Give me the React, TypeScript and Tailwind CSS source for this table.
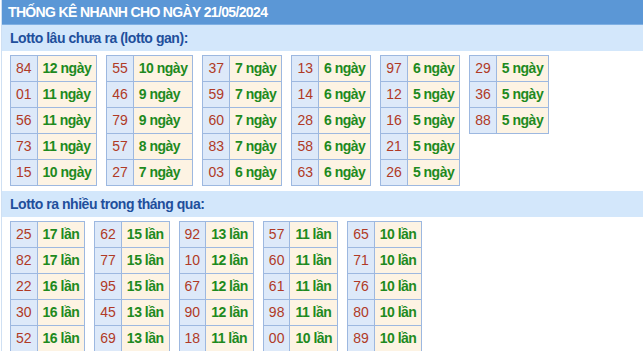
const ganData: [string, string][][] = [
  [["84", "12 ngày"], ["01", "11 ngày"], ["56", "11 ngày"], ["73", "11 ngày"], ["15", "10 ngày"]],
  [["55", "10 ngày"], ["46", "9 ngày"], ["79", "9 ngày"], ["57", "8 ngày"], ["27", "7 ngày"]],
  [["37", "7 ngày"], ["59", "7 ngày"], ["60", "7 ngày"], ["83", "7 ngày"], ["03", "6 ngày"]],
  [["13", "6 ngày"], ["14", "6 ngày"], ["28", "6 ngày"], ["58", "6 ngày"], ["63", "6 ngày"]],
  [["97", "6 ngày"], ["12", "5 ngày"], ["16", "5 ngày"], ["21", "5 ngày"], ["26", "5 ngày"]],
  [["29", "5 ngày"], ["36", "5 ngày"], ["88", "5 ngày"]],
];

const nhieuData: [string, string][][] = [
  [["25", "17 lần"], ["82", "17 lần"], ["22", "16 lần"], ["30", "16 lần"], ["52", "16 lần"]],
  [["62", "15 lần"], ["77", "15 lần"], ["95", "15 lần"], ["45", "13 lần"], ["69", "13 lần"]],
  [["92", "13 lần"], ["10", "12 lần"], ["67", "12 lần"], ["90", "12 lần"], ["18", "11 lần"]],
  [["57", "11 lần"], ["60", "11 lần"], ["61", "11 lần"], ["98", "11 lần"], ["00", "10 lần"]],
  [["65", "10 lần"], ["71", "10 lần"], ["76", "10 lần"], ["80", "10 lần"], ["89", "10 lần"]],
];

function LottoTable({ rows }: { rows: [string, string][] }) {
  return (
    <table className="border-collapse self-start">
      <tbody>
        {rows.map(([num, val]) => (
          <tr key={num} className="h-[26px]">
            <td className="border border-[#9db8e0] bg-[#dde9f9] px-[5px] text-[14px] text-[#b03a26]">{num}</td>
            <td className="border border-[#9db8e0] bg-[#fdf3e3] px-[5px] text-[14px] font-bold tracking-[-0.5px] text-[#1e8a1e]">{val}</td>
          </tr>
        ))}
      </tbody>
    </table>
  );
}

function SectionBar({ title }: { title: string }) {
  return (
    <div className="h-[26px] bg-[#d3e7fb] pl-[8px] flex items-center text-[14px] font-bold tracking-[-0.45px] text-[#1f4f9c]">
      {title}
    </div>
  );
}

export default function App() {
  return (
    <div className="w-[643px] h-[351px] overflow-hidden bg-white" style={{ fontFamily: '"Liberation Sans", Arial, sans-serif' }}>
      <div className="ml-[1px] border-l border-[#cfe0f3] min-h-full">
        <div className="h-[25px] bg-[#5b97d6] border-b border-[#7fb0e3] pl-[6px] flex items-center text-[14px] font-bold text-white tracking-[-0.65px]">
          THỐNG KÊ NHANH CHO NGÀY 21/05/2024
        </div>
        <SectionBar title="Lotto lâu chưa ra (lotto gan):" />
        <div className="flex gap-[9px] pl-[8px] pt-[4px] pb-[5px]">
          {ganData.map((t, i) => (
            <LottoTable key={i} rows={t} />
          ))}
        </div>
        <SectionBar title="Lotto ra nhiều trong tháng qua:" />
        <div className="flex gap-[9px] pl-[8px] pt-[4px]">
          {nhieuData.map((t, i) => (
            <LottoTable key={i} rows={t} />
          ))}
        </div>
      </div>
    </div>
  );
}
